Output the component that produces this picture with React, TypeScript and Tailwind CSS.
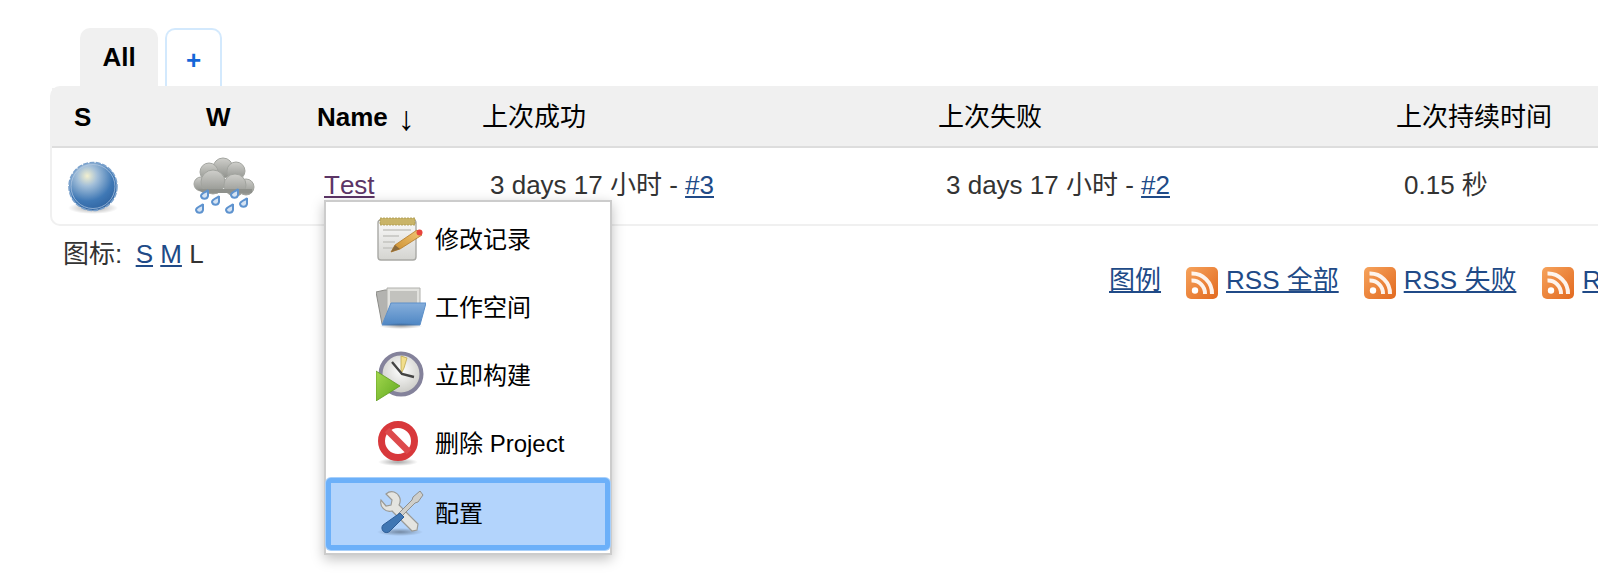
import React from "react";

const Defs = () => (
  <svg width="0" height="0" className="absolute">
    <defs>
      <radialGradient id="ball" cx="0.38" cy="0.28" r="0.75">
        <stop offset="0" stopColor="#f3f0cf" />
        <stop offset="0.28" stopColor="#a3bfd9" />
        <stop offset="0.7" stopColor="#3f78b5" />
        <stop offset="1" stopColor="#2f63a0" />
      </radialGradient>
      <linearGradient id="cloud" x1="0" y1="0" x2="0" y2="1">
        <stop offset="0" stopColor="#cfcfcb" />
        <stop offset="1" stopColor="#8f918c" />
      </linearGradient>
      <linearGradient id="paper" x1="0" y1="0" x2="0" y2="1">
        <stop offset="0" stopColor="#fafafa" />
        <stop offset="1" stopColor="#d4d4d0" />
      </linearGradient>
      <linearGradient id="pencil" x1="0" y1="1" x2="1" y2="0">
        <stop offset="0" stopColor="#c98a2a" />
        <stop offset="1" stopColor="#f2c877" />
      </linearGradient>
      <linearGradient id="folder" x1="0" y1="0" x2="0" y2="1">
        <stop offset="0" stopColor="#86aedb" />
        <stop offset="1" stopColor="#4f87c4" />
      </linearGradient>
      <radialGradient id="clock" cx="0.5" cy="0.4" r="0.6">
        <stop offset="0" stopColor="#ffffff" />
        <stop offset="1" stopColor="#c9c9c4" />
      </radialGradient>
      <linearGradient id="play" x1="0" y1="0" x2="1" y2="1">
        <stop offset="0" stopColor="#a4d84f" />
        <stop offset="1" stopColor="#5fa81f" />
      </linearGradient>
      <linearGradient id="rss" x1="0" y1="0" x2="1" y2="1">
        <stop offset="0" stopColor="#f6a35c" />
        <stop offset="1" stopColor="#e2691f" />
      </linearGradient>
      <radialGradient id="shade" cx="0.5" cy="0.5" r="0.5">
        <stop offset="0" stopColor="#000" stopOpacity="0.35" />
        <stop offset="1" stopColor="#000" stopOpacity="0" />
      </radialGradient>
    </defs>
  </svg>
);

const Ball = () => (
  <svg width="52" height="54" viewBox="0 0 52 54" className="block blur-[0.4px]">
    <ellipse cx="26" cy="47" rx="25" ry="6" fill="url(#shade)" />
    <circle cx="26" cy="25.5" r="24" fill="url(#ball)" stroke="#7ba2cd" strokeWidth="1.6" strokeDasharray="5 1.4" />
    <circle cx="26" cy="25.5" r="22" fill="none" stroke="#b5cbe4" strokeWidth="1" opacity="0.7" />
  </svg>
);

const Drop = ({ x, y }: { x: number; y: number }) => (
  <path
    d={`M${x + 5} ${y} C${x + 4} ${y + 2} ${x - 2} ${y + 3} ${x - 2} ${y + 6} A3.6 3.6 0 0 0 ${x + 5} ${y + 6} C${x + 5} ${y + 4} ${x + 5} ${y + 2} ${x + 5} ${y}Z`}
    fill="#d5e3f3"
    stroke="#5e93cf"
    strokeWidth="2"
  />
);

const Storm = () => (
  <svg width="62" height="58" viewBox="0 0 62 58" className="block blur-[0.4px]">
    <g fill="url(#cloud)" stroke="#a2a49f" strokeWidth="1">
      <circle cx="30" cy="11" r="10" />
      <circle cx="43" cy="14" r="9" />
      <circle cx="16" cy="15" r="9" />
      <circle cx="53" cy="30" r="8" />
      <circle cx="8" cy="27" r="7" />
      <circle cx="20" cy="25" r="12" />
      <circle cx="42" cy="28" r="11" />
      <path d="M4 32h55v4H10z" stroke="none" fill="#8f918c" />
    </g>
    <Drop x={10} y={33} />
    <Drop x={21} y={39} />
    <Drop x={40} y={32} />
    <Drop x={49} y={41} />
    <Drop x={5} y={47} />
    <Drop x={35} y={47} />
  </svg>
);

const Notepad = () => (
  <svg width="48" height="46" viewBox="0 0 48 46" className="block blur-[0.4px]">
    <rect x="2" y="3" width="38" height="40" rx="3" fill="url(#paper)" stroke="#a9a9a5" strokeWidth="1.4" />
    <rect x="4" y="1" width="35" height="7" fill="#c9b468" stroke="#a8974f" strokeWidth="0.8" strokeDasharray="2 1" />
    <g stroke="#c4c4c0" strokeWidth="1.4">
      <path d="M7 13h28M7 19h16M7 25h12M7 31h10" />
    </g>
    <path d="M15 35l4-7L41 13l5 5-22 14z" fill="url(#pencil)" stroke="#b27a2a" strokeWidth="0.8" />
    <path d="M15 35l4-7 5 4z" fill="#8a6a3c" />
    <circle cx="43.5" cy="15.5" r="3" fill="#e8443d" />
  </svg>
);

const Folder = () => (
  <svg width="50" height="42" viewBox="0 0 50 42" className="block blur-[0.4px]">
    <path d="M0 5l9-2h5v34H6z" fill="#b3b3b0" stroke="#8c8c88" />
    <path d="M11 1h33v24H11z" fill="#e2e2de" stroke="#b0b0ac" />
    <path d="M14 4h27v14H14z" fill="#c2c2be" />
    <path d="M15 16h35l-6 22H6z" fill="url(#folder)" stroke="#5c8fc9" />
    <ellipse cx="25" cy="39" rx="22" ry="3" fill="url(#shade)" />
  </svg>
);

const Clock = () => (
  <svg width="48" height="50" viewBox="0 0 48 50" className="block blur-[0.4px]">
    <circle cx="25" cy="23" r="20.5" fill="url(#clock)" stroke="#84829b" strokeWidth="4" />
    <path d="M25 5l6 2-3 10-3 6z" fill="#f2de8c" stroke="#bfa94f" strokeWidth="0.8" />
    <path d="M16 11l10 12 12 3" fill="none" stroke="#444" strokeWidth="2.4" />
    <path d="M0 20l24 15L0 50z" fill="url(#play)" stroke="#5f9a1f" strokeWidth="0.8" />
  </svg>
);

const NoSign = () => (
  <svg width="44" height="46" viewBox="0 0 44 46" className="block blur-[0.4px]">
    <ellipse cx="22" cy="41" rx="20" ry="4" fill="url(#shade)" />
    <circle cx="22" cy="20" r="16.5" fill="#fff" stroke="#d8383b" strokeWidth="7" />
    <path d="M11 9l22 22" stroke="#dd4a4c" strokeWidth="6.5" />
  </svg>
);

const Tools = () => (
  <svg width="48" height="46" viewBox="0 0 48 46" className="block blur-[0.4px]">
    <ellipse cx="24" cy="41" rx="23" ry="4" fill="url(#shade)" />
    <path d="M15 1a9 9 0 0 0-8 2l6 6-1 5-5 1-5-6a9 9 0 0 0 11 11l20 20 5-1 1-6L20 14A9 9 0 0 0 15 1z" fill="#e4e4e0" stroke="#9a9a96" strokeWidth="1.2" transform="translate(3 0)" />
    <path d="M44 0l3 4-5 7-3 1L25 26l-3-3 14-14 1-3z" fill="#cfcfcb" stroke="#8f8f8b" strokeWidth="1" />
    <path d="M24 22l4 4L14 40a4.5 4.5 0 0 1-7-6z" fill="#3f76b3" stroke="#2d5c96" strokeWidth="1" />
  </svg>
);

const Rss = () => (
  <svg width="32" height="32" viewBox="0 0 32 32" className="block shrink-0">
    <rect width="32" height="32" rx="5" fill="url(#rss)" />
    <circle cx="9" cy="23.5" r="3.2" fill="#fff" />
    <path d="M5.5 13.5A13 13 0 0 1 19 27M5.5 6.5A20 20 0 0 1 26 27" fill="none" stroke="#fff" strokeWidth="4" opacity="0.9" />
  </svg>
);

const A = ({ children, className = "" }: { children: React.ReactNode; className?: string }) => (
  <a href="#" className={`text-[#204a87] underline ${className}`}>
    {children}
  </a>
);

const items: [React.ReactNode, string][] = [
  [<Notepad />, "修改记录"],
  [<Folder />, "工作空间"],
  [<Clock />, "立即构建"],
  [<NoSign />, "删除 Project"],
  [<Tools />, "配置"],
];

export default function App() {
  return (
    <div
      className="relative w-[1598px] h-[584px] overflow-hidden bg-white pt-[28px] pl-[50px] text-[26px] leading-[30px] text-[#333]"
      style={{ fontFamily: '"Liberation Sans", "Noto Sans CJK SC", sans-serif' }}
    >
      <Defs />
      <div className="flex gap-[7px] pl-[30px] h-[58px]">
        <div className="w-[78px] bg-[#f0f0f0] rounded-t-[10px] flex items-center justify-center font-bold text-black">
          All
        </div>
        <div className="w-[57px] bg-white border-2 border-b-0 border-[#d3e9fd] rounded-t-[10px] flex items-center justify-center font-bold text-[#1566d8] pt-[4px]">
          +
        </div>
      </div>

      <div className="border-2 border-r-0 border-[#f0f0f0] rounded-l-[10px] h-[140px] flex flex-col">
        <div className="h-[60px] bg-[#f0f0f0] border-b-2 border-[#dddddd] flex items-center font-bold text-black shrink-0">
          <div className="w-[129px] pl-[22px]">S</div>
          <div className="w-[111px] pl-[25px]">W</div>
          <div className="w-[166px] pl-[25px] flex items-center h-[30px]">
            Name<span className="ml-[10px] font-normal text-[34px] leading-[30px] pt-[2px]">↓</span>
          </div>
          <div className="w-[456px] pl-[24px] font-normal">上次成功</div>
          <div className="w-[458px] pl-[24px] font-normal">上次失败</div>
          <div className="pl-[24px] font-normal">上次持续时间</div>
        </div>
        <div className="flex-1 flex items-center">
          <div className="w-[129px] pl-[15px] pt-[4px]">
            <Ball />
          </div>
          <div className="w-[111px] pl-[12px]">
            <Storm />
          </div>
          <div className="w-[166px] pl-[32px] pb-[2px]">
            <a href="#" className="text-[#5c3566] underline [font-kerning:none]">
              Test
            </a>
          </div>
          <div className="w-[456px] pl-[32px] pb-[2px]">
            3 days 17 小时 - <A>#3</A>
          </div>
          <div className="w-[458px] pl-[32px] pb-[2px]">
            3 days 17 小时 - <A>#2</A>
          </div>
          <div className="pl-[32px] pb-[2px]">0.15 秒</div>
        </div>
      </div>

      <div className="flex items-start">
        <div className="w-[1059px] pl-[13px] pt-[13px] shrink-0 whitespace-nowrap">
          图标:&nbsp; <A className="-ml-[1px]">S</A> <A>M</A> <span>L</span>
        </div>
        <div className="flex items-start pt-[39px] whitespace-nowrap shrink-0">
          <A>图例</A>
          <div className="ml-[25px] mt-[2px]">
            <Rss />
          </div>
          <A className="ml-[8px]">RSS 全部</A>
          <div className="ml-[25px] mt-[2px]">
            <Rss />
          </div>
          <A className="ml-[8px]">RSS 失败</A>
          <div className="ml-[26px] mt-[2px]">
            <Rss />
          </div>
          <A className="ml-[8px]">RSS 最新构建</A>
        </div>
      </div>

      <div className="absolute left-[324px] top-[200px] w-[288px] h-[355px] bg-white border-2 border-[#cccccc] shadow-[0_4px_12px_rgba(0,0,0,0.25)] text-black text-[24px] pt-[4px]">
        {items.map(([icon, label], i) => (
          <div
            key={label}
            className={
              i === 4
                ? "mx-0 h-[72px] flex items-center bg-[#b3d4fc] border-[5px] border-[#6cb0f9] rounded-[5px] ring-1 ring-[#a8d0fb] pl-[45px]"
                : "h-[68px] flex items-center pl-[50px]"
            }
          >
            <div className="w-[59px] flex justify-start shrink-0">{icon}</div>
            <span>{label}</span>
          </div>
        ))}
      </div>
    </div>
  );
}
